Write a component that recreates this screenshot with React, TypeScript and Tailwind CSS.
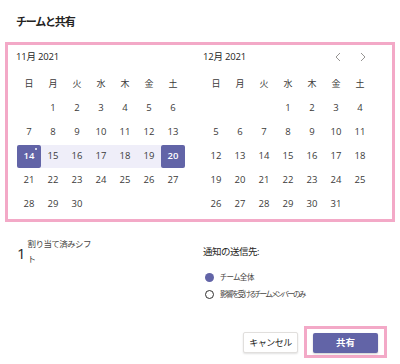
import React from "react";

const weekdays = ["日", "月", "火", "水", "木", "金", "土"];

const nov: (number | null)[][] = [
  [null, 1, 2, 3, 4, 5, 6],
  [7, 8, 9, 10, 11, 12, 13],
  [14, 15, 16, 17, 18, 19, 20],
  [21, 22, 23, 24, 25, 26, 27],
  [28, 29, 30, null, null, null, null],
];

const dec: (number | null)[][] = [
  [null, null, null, 1, 2, 3, 4],
  [5, 6, 7, 8, 9, 10, 11],
  [12, 13, 14, 15, 16, 17, 18],
  [19, 20, 21, 22, 23, 24, 25],
  [26, 27, 28, 29, 30, 31, null],
];

const DayCell = ({ day, range }: { day: number | null; range?: boolean }) => {
  if (day === null) return <div className="h-[24px] w-[24px]" />;
  const isEnd = range && (day === 14 || day === 20);
  const inBand = range && day > 14 && day < 20;
  return (
    <div className="flex h-[24px] w-[24px] items-center">
      <div
        className={
          isEnd
            ? "relative flex h-[23px] w-[24px] items-center justify-center rounded-[2px] bg-[#6264a7] font-semibold text-white"
            : inBand
            ? "flex h-[23px] w-[24px] items-center justify-center bg-[#efeef9]"
            : "flex h-[23px] w-[24px] items-center justify-center"
        }
      >
        {day}
        {isEnd && day === 14 && (
          <span className="absolute right-[4px] top-[3px] h-[2px] w-[2px] rounded-full bg-white" />
        )}
      </div>
    </div>
  );
};

const Month = ({
  label,
  rows,
  range,
  nav,
}: {
  label: string;
  rows: (number | null)[][];
  range?: boolean;
  nav?: boolean;
}) => (
  <div className="flex flex-col">
    <div className="flex h-[20px] items-center">
      <span className="text-[9.5px] tracking-[-0.2px]">{label}</span>
      {nav && (
        <div className="ml-auto mr-[25px] flex items-center gap-[17px] text-[#979593]">
          <svg width="8" height="10" viewBox="0 0 8 10">
            <path d="M6 1 L2 5 L6 9" fill="none" stroke="currentColor" strokeWidth="1" />
          </svg>
          <svg width="8" height="10" viewBox="0 0 8 10">
            <path d="M2 1 L6 5 L2 9" fill="none" stroke="currentColor" strokeWidth="1" />
          </svg>
        </div>
      )}
    </div>
    <div className="ml-[1px] mt-[4px] grid w-[168px] grid-cols-7 text-center">
      {weekdays.map((w) => (
        <div key={w} className="flex h-[25px] items-center justify-center text-[9px] text-[#3b3a39]">
          {w}
        </div>
      ))}
    </div>
    <div className="ml-[1px] flex w-[168px] flex-col text-[9.5px] text-[#3b3a39]">
      {rows.map((r, i) => (
        <div key={i} className="flex">
          {r.map((d, j) => (
            <DayCell key={j} day={d} range={range} />
          ))}
        </div>
      ))}
    </div>
  </div>
);

export default function App() {
  return (
    <div className="h-[364px] w-[400px] overflow-hidden bg-white font-['Open_Sans','Noto_Sans_CJK_JP',sans-serif] text-[#252423]">
      <div className="h-[42px] pl-[16px] pt-[14px] text-[11px] font-semibold leading-[16px] tracking-[-1.2px]">
        チームと共有
      </div>
      <div className="mx-[5px] h-[180px] border-[3px] border-[#f3a9c7] pl-[8px] pt-[2px]">
        <div className="flex">
          <div className="w-[187px]">
            <Month label="11月 2021" rows={nov} range />
          </div>
          <div className="flex-1">
            <Month label="12月 2021" rows={dec} nav />
          </div>
        </div>
      </div>
      <div className="flex pt-[14px]">
        <div className="flex w-[203px] items-start pl-[17px]">
          <span className="mt-[7px] text-[15px] font-medium leading-[20px]">1</span>
          <span className="ml-[2px] w-[66px] break-all text-[8.5px] leading-[15px] tracking-[-0.6px] text-[#484644]">
            割り当て済みシフト
          </span>
        </div>
        <div className="flex flex-col pt-[9px]">
          <div className="text-[9.5px] leading-[14px] tracking-[-0.5px]">通知の送信先:</div>
          <div className="mt-[10px] flex h-[17px] items-center pl-[2px]">
            <span className="h-[9px] w-[9px] rounded-full bg-[#6264a7]" />
            <span className="ml-[6px] text-[7.5px] tracking-[-0.4px] text-[#484644] [font-feature-settings:'palt']">
              チーム全体
            </span>
          </div>
          <div className="flex h-[17px] items-center pl-[2px]">
            <span className="h-[9px] w-[9px] rounded-full border border-[#323130]" />
            <span className="ml-[6px] text-[7.5px] tracking-[-1.5px] text-[#484644] [font-feature-settings:'palt']">
              影響を受けるチーム メンバーのみ
            </span>
          </div>
        </div>
      </div>
      <div className="mt-[23px] flex items-start justify-end pr-[13px]">
        <button className="mr-[6px] mt-[6px] flex h-[21px] w-[55px] items-center justify-center rounded-[2px] border border-[#e1dfdd] bg-white text-[9px] tracking-[-0.5px] shadow-[0_1px_2px_rgba(0,0,0,0.12)]">
          キャンセル
        </button>
        <div className="border-[3px] border-[#f3a9c7] px-[6px] pb-[2px] pt-[4px]">
          <button className="flex h-[20px] w-[65px] items-center justify-center rounded-[2px] bg-[#6264a7] text-[9.5px] font-semibold text-white shadow-[0_1px_2px_rgba(0,0,0,0.2)]">
            共有
          </button>
        </div>
      </div>
    </div>
  );
}
